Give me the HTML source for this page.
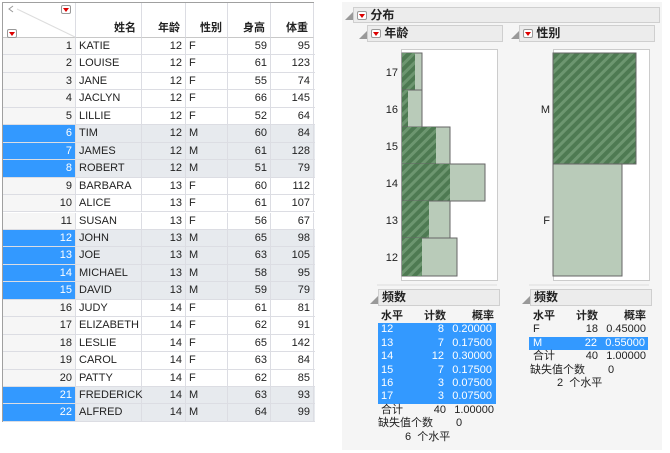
<!DOCTYPE html>
<html><head><meta charset="utf-8"><style>
*{margin:0;padding:0;box-sizing:border-box}
body{width:670px;height:453px;background:#fff;position:relative;overflow:hidden;font-family:"Liberation Sans","Noto Sans CJK SC",sans-serif;font-size:11px;color:#222}
.a{position:absolute}
#tbl{left:2px;top:2px;width:312px;height:420px;border:1px solid #a0a0a0;border-right:none;border-bottom:none}
.r{position:absolute;left:0;width:312px;height:17.45px;border-bottom:1px solid #dcdde3;line-height:16px}
.r div{position:absolute;top:0;height:100%;padding:0 3px;border-right:1px solid #dcdde3}
.c0{left:0;width:73px;text-align:right;background:#f6f6f6}
.c1{left:73px;width:66px}
.c2{left:139px;width:44px;text-align:right}
.c3{left:183px;width:42px}
.c4{left:225px;width:43px;text-align:right}
.c5{left:268px;width:43px;text-align:right}
.s{background:#e7eaee}
.s .c0{background:#3399ff;color:#fff}
.hd{position:absolute;top:0;height:35px;border-right:1px solid #dcdde3;border-bottom:1px solid #c8c8c8;font-weight:bold;text-align:right;padding:16px 5px 0 0}
.tri{display:inline-block;width:10px;height:9px;border:1px solid #999;border-radius:2px;background:#fff;position:relative}
.tri:after{content:"";position:absolute;left:1px;top:2px;border-left:3px solid transparent;border-right:3px solid transparent;border-top:4px solid #d00}
.box{background:#ececec;border:1px solid #cfcfcf;font-weight:bold;font-size:12px;line-height:14px;padding-left:3px}
.disc{color:#999;font-size:8px}
.ft{font-size:11px;line-height:13.4px}
.ft .row{position:relative;height:13.4px}
.ft span{position:absolute}
</style></head><body>
<div id="tbl" class="a">
<div class="hd" style="left:0;width:73px;background:#fff;padding:0">
<svg width="73" height="35" style="position:absolute;left:0;top:0"><line x1="14" y1="6" x2="72" y2="34" stroke="#ddd"/><path d="M10 3 L6 6 L10 9" fill="none" stroke="#999"/></svg>
<span class="tri" style="position:absolute;left:58px;top:2px"></span><span class="tri" style="position:absolute;left:4px;top:26px"></span></div>
<div class="hd" style="left:73px;width:66px">姓名</div>
<div class="hd" style="left:139px;width:44px">年龄</div>
<div class="hd" style="left:183px;width:42px">性别</div>
<div class="hd" style="left:225px;width:43px">身高</div>
<div class="hd" style="left:268px;width:43px">体重</div>
<div class="r" style="top:35px"><div class="c0">1</div><div class="c1">KATIE</div><div class="c2">12</div><div class="c3">F</div><div class="c4">59</div><div class="c5">95</div></div>
<div class="r" style="top:52.45px"><div class="c0">2</div><div class="c1">LOUISE</div><div class="c2">12</div><div class="c3">F</div><div class="c4">61</div><div class="c5">123</div></div>
<div class="r" style="top:69.9px"><div class="c0">3</div><div class="c1">JANE</div><div class="c2">12</div><div class="c3">F</div><div class="c4">55</div><div class="c5">74</div></div>
<div class="r" style="top:87.35px"><div class="c0">4</div><div class="c1">JACLYN</div><div class="c2">12</div><div class="c3">F</div><div class="c4">66</div><div class="c5">145</div></div>
<div class="r" style="top:104.8px"><div class="c0">5</div><div class="c1">LILLIE</div><div class="c2">12</div><div class="c3">F</div><div class="c4">52</div><div class="c5">64</div></div>
<div class="r s" style="top:122.25px"><div class="c0">6</div><div class="c1">TIM</div><div class="c2">12</div><div class="c3">M</div><div class="c4">60</div><div class="c5">84</div></div>
<div class="r s" style="top:139.7px"><div class="c0">7</div><div class="c1">JAMES</div><div class="c2">12</div><div class="c3">M</div><div class="c4">61</div><div class="c5">128</div></div>
<div class="r s" style="top:157.15px"><div class="c0">8</div><div class="c1">ROBERT</div><div class="c2">12</div><div class="c3">M</div><div class="c4">51</div><div class="c5">79</div></div>
<div class="r" style="top:174.6px"><div class="c0">9</div><div class="c1">BARBARA</div><div class="c2">13</div><div class="c3">F</div><div class="c4">60</div><div class="c5">112</div></div>
<div class="r" style="top:192.05px"><div class="c0">10</div><div class="c1">ALICE</div><div class="c2">13</div><div class="c3">F</div><div class="c4">61</div><div class="c5">107</div></div>
<div class="r" style="top:209.5px"><div class="c0">11</div><div class="c1">SUSAN</div><div class="c2">13</div><div class="c3">F</div><div class="c4">56</div><div class="c5">67</div></div>
<div class="r s" style="top:226.95px"><div class="c0">12</div><div class="c1">JOHN</div><div class="c2">13</div><div class="c3">M</div><div class="c4">65</div><div class="c5">98</div></div>
<div class="r s" style="top:244.4px"><div class="c0">13</div><div class="c1">JOE</div><div class="c2">13</div><div class="c3">M</div><div class="c4">63</div><div class="c5">105</div></div>
<div class="r s" style="top:261.85px"><div class="c0">14</div><div class="c1">MICHAEL</div><div class="c2">13</div><div class="c3">M</div><div class="c4">58</div><div class="c5">95</div></div>
<div class="r s" style="top:279.3px"><div class="c0">15</div><div class="c1">DAVID</div><div class="c2">13</div><div class="c3">M</div><div class="c4">59</div><div class="c5">79</div></div>
<div class="r" style="top:296.75px"><div class="c0">16</div><div class="c1">JUDY</div><div class="c2">14</div><div class="c3">F</div><div class="c4">61</div><div class="c5">81</div></div>
<div class="r" style="top:314.2px"><div class="c0">17</div><div class="c1">ELIZABETH</div><div class="c2">14</div><div class="c3">F</div><div class="c4">62</div><div class="c5">91</div></div>
<div class="r" style="top:331.65px"><div class="c0">18</div><div class="c1">LESLIE</div><div class="c2">14</div><div class="c3">F</div><div class="c4">65</div><div class="c5">142</div></div>
<div class="r" style="top:349.1px"><div class="c0">19</div><div class="c1">CAROL</div><div class="c2">14</div><div class="c3">F</div><div class="c4">63</div><div class="c5">84</div></div>
<div class="r" style="top:366.55px"><div class="c0">20</div><div class="c1">PATTY</div><div class="c2">14</div><div class="c3">F</div><div class="c4">62</div><div class="c5">85</div></div>
<div class="r s" style="top:384px"><div class="c0">21</div><div class="c1">FREDERICK</div><div class="c2">14</div><div class="c3">M</div><div class="c4">63</div><div class="c5">93</div></div>
<div class="r s" style="top:401.45px"><div class="c0">22</div><div class="c1">ALFRED</div><div class="c2">14</div><div class="c3">M</div><div class="c4">64</div><div class="c5">99</div></div>
</div>

<div class="a" style="left:342px;top:2px;width:320px;height:448px;background:#f5f5f5"></div>
<span class="a disc" style="left:345px;top:11px">◢</span>
<div class="a box" style="left:353px;top:7px;width:307px;height:16px"><span class="tri" style="vertical-align:-1px"></span> 分布</div>
<span class="a disc" style="left:359px;top:30px">◢</span>
<div class="a box" style="left:367px;top:25px;width:136px;height:17px"><span class="tri" style="vertical-align:-1px"></span> 年龄</div>
<span class="a disc" style="left:511px;top:30px">◢</span>
<div class="a box" style="left:519px;top:25px;width:136px;height:17px"><span class="tri" style="vertical-align:-1px"></span> 性别</div>

<svg class="a" style="left:0;top:0" width="670" height="453">
<defs><pattern id="h" width="7" height="7" patternUnits="userSpaceOnUse" patternTransform="rotate(45)"><rect width="7" height="7" fill="#4e7a52"/><rect width="3" height="7" fill="#6d9670"/></pattern></defs>
<rect x="401.5" y="49.5" width="96" height="231" fill="#fff" stroke="#ccc"/>
<rect x="553.5" y="49.5" width="96" height="231" fill="#fff" stroke="#ccc"/>
<g stroke="#666" stroke-width="1">
<rect x="402" y="53" width="20" height="37" fill="#b9cbb9"/><rect x="402" y="53" width="13" height="37" fill="url(#h)" stroke="none"/>
<rect x="402" y="90" width="20" height="37" fill="#b9cbb9"/><rect x="402" y="90" width="6" height="37" fill="url(#h)" stroke="none"/>
<rect x="402" y="127" width="48" height="37" fill="#b9cbb9"/><rect x="402" y="127" width="34" height="37" fill="url(#h)" stroke="none"/>
<rect x="402" y="164" width="83" height="37" fill="#b9cbb9"/><rect x="402" y="164" width="48" height="37" fill="url(#h)" stroke="none"/>
<rect x="402" y="201" width="48" height="37" fill="#b9cbb9"/><rect x="402" y="201" width="27" height="37" fill="url(#h)" stroke="none"/>
<rect x="402" y="238" width="55" height="38" fill="#b9cbb9"/><rect x="402" y="238" width="20" height="38" fill="url(#h)" stroke="none"/>
<rect x="553" y="53" width="83" height="111" fill="url(#h)"/>
<rect x="553" y="164" width="69" height="112" fill="#b9cbb9"/>
</g>
<g font-size="11" fill="#222" text-anchor="end" font-family="Liberation Sans">
<text x="398" y="76">17</text><text x="398" y="113">16</text><text x="398" y="150">15</text><text x="398" y="187">14</text><text x="398" y="224">13</text><text x="398" y="261">12</text>
<text x="550" y="113">M</text><text x="550" y="224">F</text></g>
<line x1="377" y1="285" x2="497" y2="285" stroke="#ddd"/><line x1="529" y1="285" x2="649" y2="285" stroke="#ddd"/>
</svg>

<span class="a disc" style="left:370px;top:295px">◢</span>
<div class="a box" style="left:378px;top:289px;width:122px;height:17px">频数</div>
<span class="a disc" style="left:522px;top:295px">◢</span>
<div class="a box" style="left:530px;top:289px;width:122px;height:17px">频数</div>

<div class="a ft" style="left:378px;top:310px;width:120px">
<div class="row" style="font-weight:bold"><span style="left:3px">水平</span><span style="right:52px">计数</span><span style="right:4px">概率</span></div>
<div style="background:#3399ff;color:#fff;width:118px">
<div class="row"><span style="left:3px">12</span><span style="right:52px">8</span><span style="right:4px">0.20000</span></div>
<div class="row"><span style="left:3px">13</span><span style="right:52px">7</span><span style="right:4px">0.17500</span></div>
<div class="row"><span style="left:3px">14</span><span style="right:52px">12</span><span style="right:4px">0.30000</span></div>
<div class="row"><span style="left:3px">15</span><span style="right:52px">7</span><span style="right:4px">0.17500</span></div>
<div class="row"><span style="left:3px">16</span><span style="right:52px">3</span><span style="right:4px">0.07500</span></div>
<div class="row"><span style="left:3px">17</span><span style="right:52px">3</span><span style="right:4px">0.07500</span></div></div>
<div class="row"><span style="left:3px">合计</span><span style="right:52px">40</span><span style="right:4px">1.00000</span></div>
<div class="row"><span style="left:0">缺失值个数</span><span style="left:78px">0</span></div>
<div class="row"><span style="left:27px">6&nbsp; 个水平</span></div>
</div>

<div class="a ft" style="left:530px;top:310px;width:120px">
<div class="row" style="font-weight:bold"><span style="left:3px">水平</span><span style="right:52px">计数</span><span style="right:4px">概率</span></div>
<div class="row"><span style="left:3px">F</span><span style="right:52px">18</span><span style="right:4px">0.45000</span></div>
<div class="row" style="background:#3399ff;color:#fff;width:119px;margin-left:-1px"><span style="left:4px">M</span><span style="right:51px">22</span><span style="right:3px">0.55000</span></div>
<div class="row"><span style="left:3px">合计</span><span style="right:52px">40</span><span style="right:4px">1.00000</span></div>
<div class="row"><span style="left:0">缺失值个数</span><span style="left:78px">0</span></div>
<div class="row"><span style="left:27px">2&nbsp; 个水平</span></div>
</div>
</body></html>
